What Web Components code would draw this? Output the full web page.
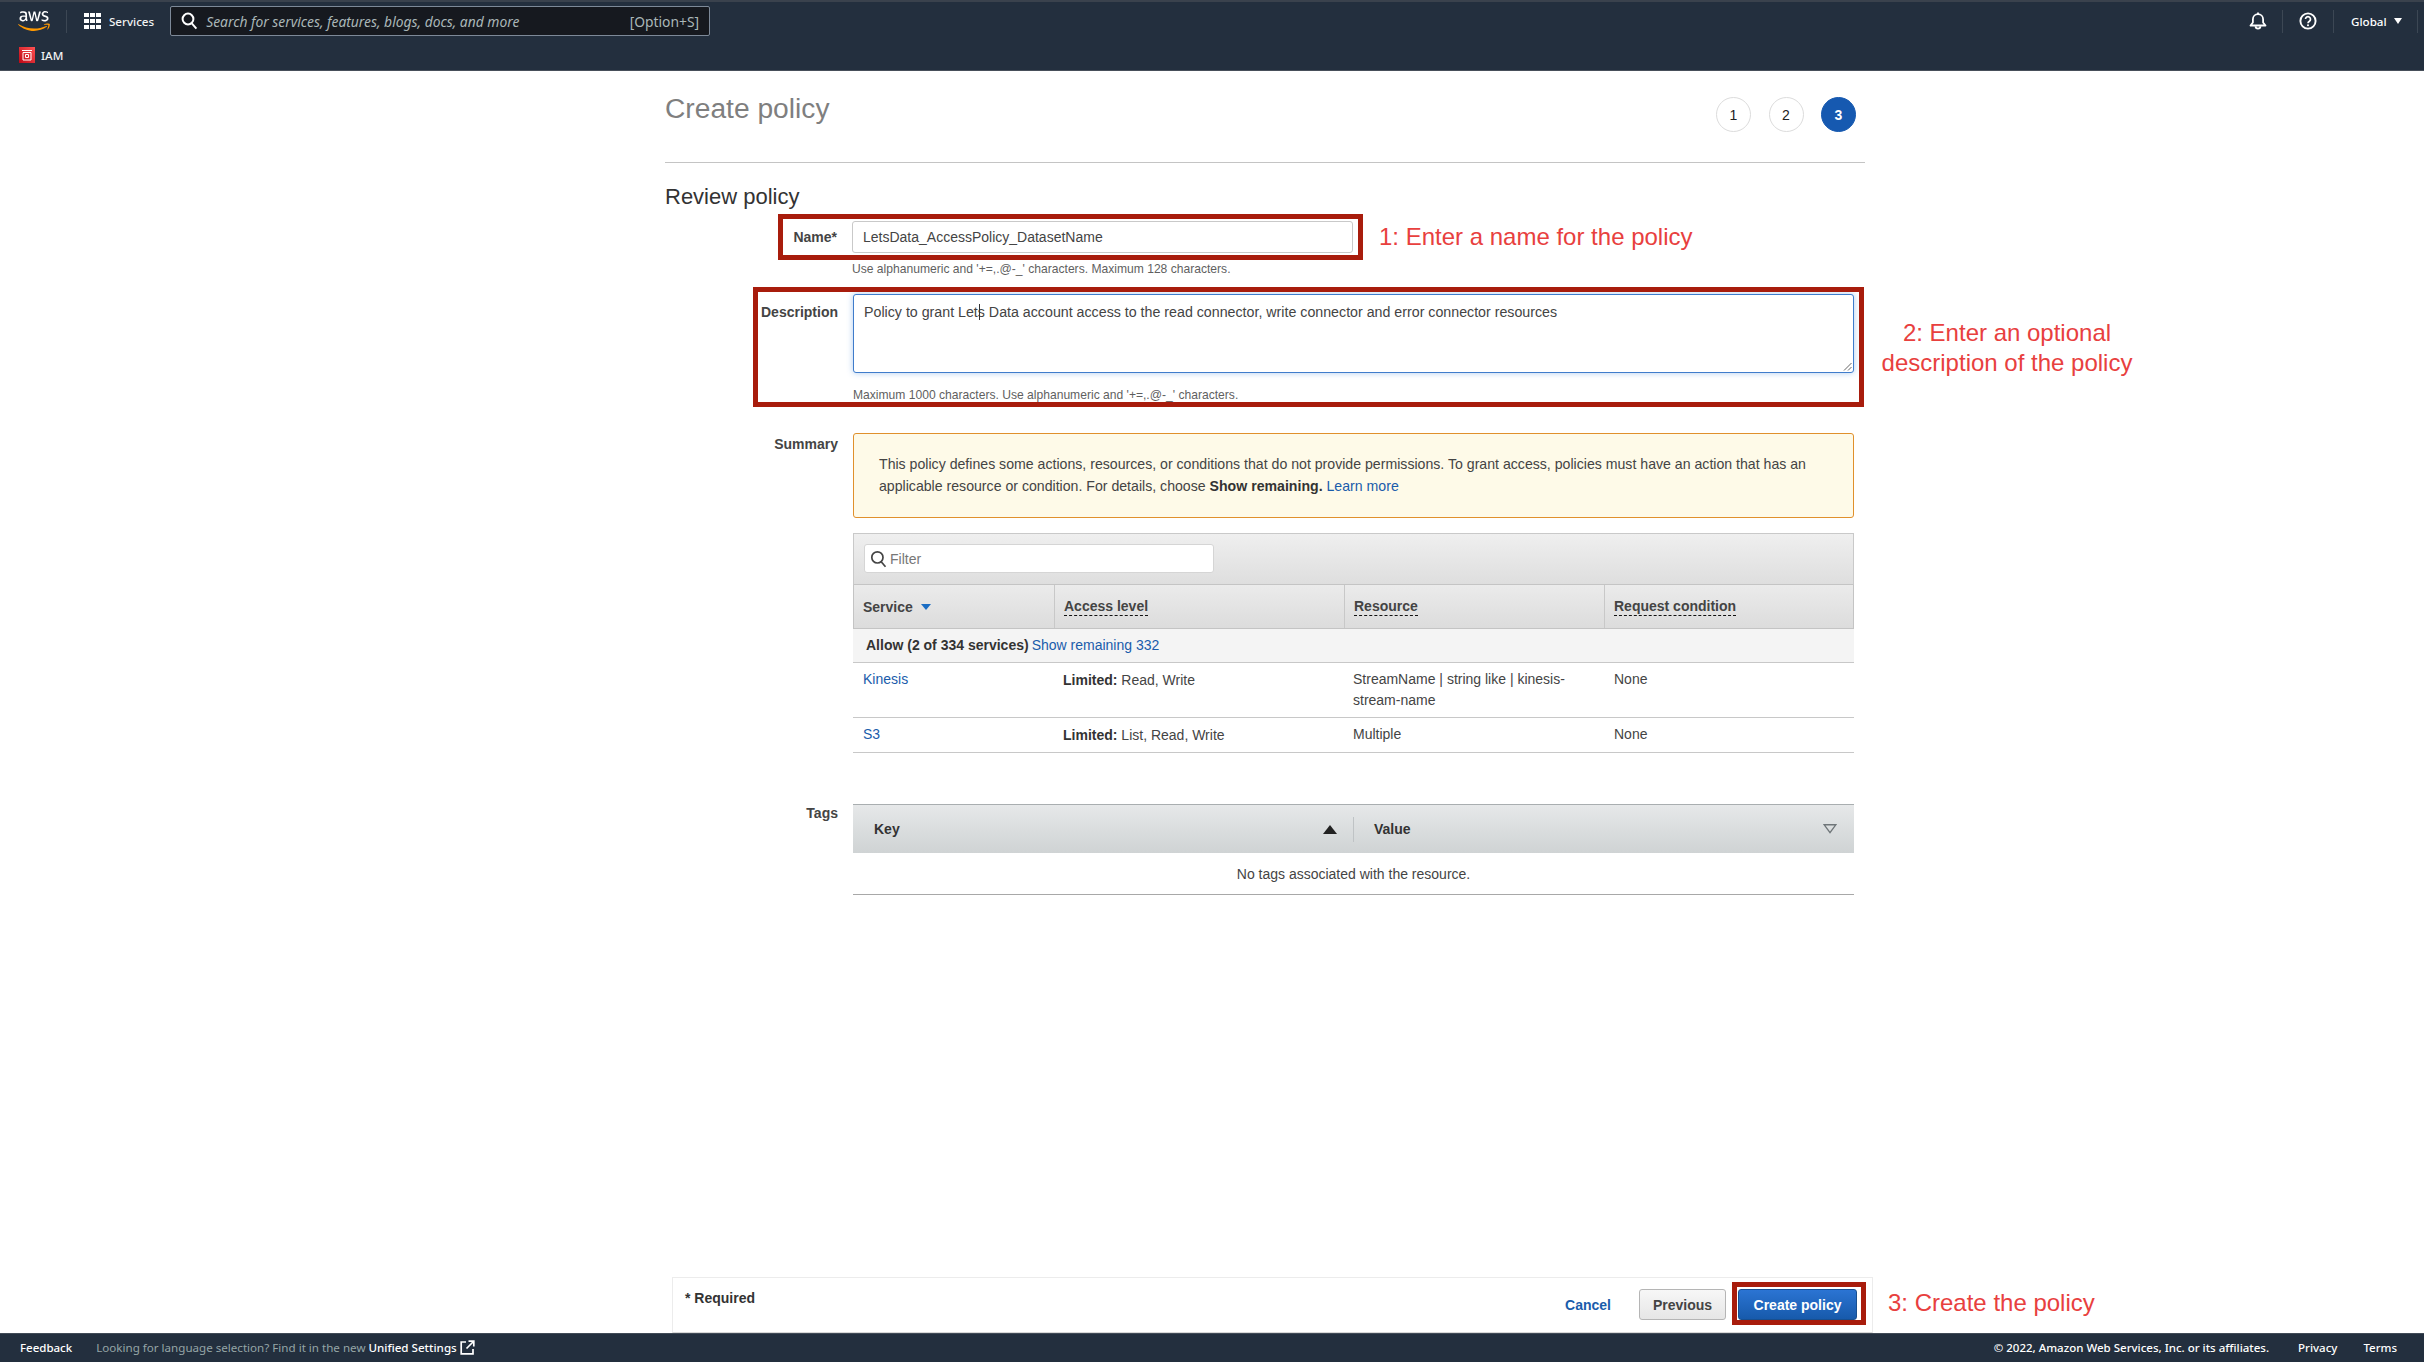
<!DOCTYPE html>
<html lang="en"><head><meta charset="utf-8"><title>Create policy</title>
<style>
html,body{margin:0;padding:0;height:100%;overflow:hidden;background:#fff}
body{display:flex;flex-direction:column;height:1362px;width:2424px;font-family:"Liberation Sans",Arial,sans-serif;font-size:14px;color:#444}
a{color:#1a5cab;text-decoration:none}
b{color:#333}
</style></head><body>

<aws-top-nav></aws-top-nav>

<policy-page>
  <page-title slot="head">Create policy</page-title>
  <wizard-steps slot="head" current="3" count="3"></wizard-steps>

  <h2-heading>Review policy</h2-heading>

  <form-row label="Name*" top="8" end="1" style="margin-top:9px">
    <text-field value="LetsData_AccessPolicy_DatasetName"></text-field>
    <field-hint style="margin-top:8px">Use alphanumeric and '+=,.@-_' characters. Maximum 128 characters.</field-hint>
  </form-row>

  <form-row label="Description" top="10" style="margin-top:17px">
    <area-field></area-field>
    <field-hint style="margin-top:14px;margin-left:0">Maximum 1000 characters. Use alphanumeric and '+=,.@-_' characters.</field-hint>
  </form-row>

  <form-row label="Summary" top="3" style="margin-top:30px">
    <warn-alert>This policy defines some actions, resources, or conditions that do not provide permissions. To grant access, policies must have an action that has an applicable resource or condition. For details, choose <b>Show remaining.</b> <a href="#">Learn more</a></warn-alert>
    <summary-table style="margin-top:15px"></summary-table>
  </form-row>

  <form-row label="Tags" top="1" style="margin-top:51px">
    <tags-table></tags-table>
  </form-row>

  <action-bar slot="bar"></action-bar>

  <red-box slot="over" style="left:778px;top:143px;width:585px;height:46px"></red-box>
  <red-box slot="over" style="left:753px;top:216px;width:1111px;height:120px"></red-box>
  <red-box slot="over" style="left:1732px;top:1211px;width:134px;height:43px"></red-box>
  <note-text slot="over" style="left:1379px;top:151px">1: Enter a name for the policy</note-text>
  <note-text slot="over" style="left:1857px;top:247px;width:300px;text-align:center">2: Enter an optional<br>description of the policy</note-text>
  <note-text slot="over" style="left:1888px;top:1217px">3: Create the policy</note-text>
</policy-page>

<console-footer></console-footer>

<script>
function def(name, html){
  customElements.define(name, class extends HTMLElement{
    connectedCallback(){
      if(this.shadowRoot) return;
      const r=this.attachShadow({mode:'open'});
      r.innerHTML=typeof html==='function'?html(this):html;
    }
  });
}
const NAVF='"Noto Sans","Open Sans",sans-serif';

def('aws-logo',`<style>:host{display:block;width:32px;height:20px}svg{display:block;width:100%;height:100%}</style>
<svg viewBox="0 0 304 182" preserveAspectRatio="none"><path fill="#fff" d="M86.4,66.4c0,3.7,0.4,6.7,1.1,8.9c0.8,2.2,1.8,4.6,3.2,7.2c0.5,0.8,0.7,1.6,0.7,2.3c0,1-0.6,2-1.9,3l-6.3,4.2c-0.9,0.6-1.8,0.9-2.6,0.9c-1,0-2-0.5-3-1.4C76.2,90,75,88.4,74,86.8c-1-1.7-2-3.6-3.1-5.9c-7.8,9.2-17.6,13.8-29.4,13.8c-8.4,0-15.1-2.4-20-7.2c-4.9-4.8-7.4-11.2-7.4-19.2c0-8.5,3-15.4,9.1-20.6c6.1-5.2,14.2-7.8,24.5-7.8c3.4,0,6.9,0.3,10.6,0.8c3.7,0.5,7.5,1.3,11.5,2.2v-7.3c0-7.6-1.6-12.9-4.7-16c-3.2-3.1-8.6-4.6-16.3-4.6c-3.5,0-7.1,0.4-10.8,1.3c-3.7,0.9-7.3,2-10.8,3.4c-1.6,0.7-2.8,1.1-3.5,1.3c-0.7,0.2-1.2,0.3-1.6,0.3c-1.4,0-2.1-1-2.1-3.1v-4.9c0-1.6,0.2-2.8,0.7-3.5c0.5-0.7,1.4-1.4,2.8-2.1c3.5-1.8,7.7-3.3,12.6-4.5c4.9-1.3,10.1-1.9,15.6-1.9c11.9,0,20.6,2.7,26.2,8.1c5.5,5.4,8.3,13.6,8.3,24.6V66.4z M45.8,81.6c3.3,0,6.7-0.6,10.3-1.8c3.6-1.2,6.8-3.4,9.5-6.4c1.6-1.9,2.8-4,3.4-6.4c0.6-2.4,1-5.3,1-8.7v-4.2c-2.9-0.7-6-1.3-9.2-1.7c-3.2-0.4-6.3-0.6-9.4-0.6c-6.7,0-11.6,1.3-14.9,4c-3.3,2.7-4.9,6.5-4.9,11.5c0,4.7,1.2,8.2,3.7,10.6C37.7,80.4,41.2,81.6,45.8,81.6z M126.1,92.4c-1.8,0-3-0.3-3.8-1c-0.8-0.6-1.5-2-2.1-3.9L96.7,10.2c-0.6-2-0.9-3.3-0.9-4c0-1.6,0.8-2.5,2.4-2.5h9.8c1.9,0,3.2,0.3,3.9,1c0.8,0.6,1.4,2,2,3.9l16.8,66.2l15.6-66.2c0.5-2,1.1-3.3,1.9-3.9c0.8-0.6,2.2-1,4-1h8c1.9,0,3.2,0.3,4,1c0.8,0.6,1.5,2,1.9,3.9l15.8,67l17.3-67c0.6-2,1.3-3.3,2-3.9c0.8-0.6,2.1-1,3.9-1h9.3c1.6,0,2.5,0.8,2.5,2.5c0,0.5-0.1,1-0.2,1.6c-0.1,0.6-0.3,1.4-0.7,2.5l-24.1,77.3c-0.6,2-1.3,3.3-2.1,3.9c-0.8,0.6-2.1,1-3.8,1h-8.6c-1.9,0-3.2-0.3-4-1c-0.8-0.7-1.5-2-1.9-4L156,23l-15.4,64.4c-0.5,2-1.1,3.3-1.9,4c-0.8,0.7-2.2,1-4,1H126.1z M254.6,95.1c-5.2,0-10.4-0.6-15.4-1.8c-5-1.2-8.9-2.5-11.5-4c-1.6-0.9-2.7-1.9-3.1-2.8c-0.4-0.9-0.6-1.9-0.6-2.8v-5.1c0-2.1,0.8-3.1,2.3-3.1c0.6,0,1.2,0.1,1.8,0.3c0.6,0.2,1.5,0.6,2.5,1c3.4,1.5,7.1,2.7,11,3.5c4,0.8,7.9,1.2,11.9,1.2c6.3,0,11.2-1.1,14.6-3.3c3.4-2.2,5.2-5.4,5.2-9.5c0-2.8-0.9-5.1-2.7-7c-1.8-1.9-5.2-3.6-10.1-5.2L246,52c-7.3-2.3-12.7-5.7-16-10.2c-3.3-4.4-5-9.3-5-14.5c0-4.2,0.9-7.9,2.7-11.1c1.8-3.2,4.2-6,7.2-8.2c3-2.3,6.4-4,10.4-5.2c4-1.2,8.2-1.7,12.6-1.7c2.2,0,4.5,0.1,6.7,0.4c2.3,0.3,4.4,0.7,6.5,1.1c2,0.5,3.9,1,5.7,1.6c1.8,0.6,3.2,1.2,4.2,1.8c1.4,0.8,2.4,1.6,3,2.5c0.6,0.8,0.9,1.9,0.9,3.3v4.7c0,2.1-0.8,3.2-2.3,3.2c-0.8,0-2.1-0.4-3.8-1.2c-5.7-2.6-12.1-3.9-19.2-3.9c-5.7,0-10.2,0.9-13.3,2.8c-3.1,1.9-4.7,4.8-4.7,8.9c0,2.8,1,5.2,3,7.1c2,1.9,5.7,3.8,11,5.5l14.2,4.5c7.2,2.3,12.4,5.5,15.5,9.6c3.1,4.1,4.6,8.8,4.6,14c0,4.3-0.9,8.2-2.6,11.6c-1.8,3.4-4.2,6.4-7.3,8.8c-3.1,2.5-6.8,4.3-11.1,5.6C264.4,94.4,259.7,95.1,254.6,95.1z"/><path fill="#f90" d="M273.5,143.7c-32.9,24.3-80.7,37.2-121.8,37.2c-57.6,0-109.5-21.3-148.7-56.7c-3.1-2.8-0.3-6.6,3.4-4.4c42.4,24.6,94.7,39.5,148.8,39.5c36.5,0,76.6-7.6,113.5-23.2C274.2,133.6,278.9,139.7,273.5,143.7z"/><path fill="#f90" d="M287.2,128.1c-4.2-5.4-27.8-2.6-38.5-1.3c-3.2,0.4-3.7-2.4-0.8-4.5c18.8-13.2,49.7-9.4,53.3-5c3.6,4.5-1,35.4-18.6,50.2c-2.7,2.3-5.3,1.1-4.1-1.9C282.5,155.7,291.4,133.4,287.2,128.1z"/></svg>`);

def('aws-top-nav',`<style>
:host{display:block;height:71px;box-sizing:border-box;background:#232f3e;border-top:2px solid #3a424d;border-bottom:1px solid #474f5a;color:#fff;font-family:${NAVF};flex:none}
.row1{display:flex;align-items:center;height:34px;margin-top:2px}
aws-logo{margin-left:18px}
.sep{width:1px;height:23px;background:#3c4754}
.services{display:flex;align-items:center;gap:8px;font-size:11.6px;font-weight:500;margin-left:17px;color:#f2f3f3}
.grid{display:grid;grid-template-columns:repeat(3,4.6px);gap:1.6px}
.grid i{display:block;height:4.6px;background:#fff}
.search{margin-left:16px;width:540px;height:30px;box-sizing:border-box;background:#16191f;border:1px solid #7d8998;border-radius:2px;display:flex;align-items:center;padding:0 10px;gap:8px;font-size:13.85px;color:#aab7b8}
.search em{flex:1;font-style:italic}
.search svg{flex:none}
.right{margin-left:auto;display:flex;align-items:center;height:23px}
.ic{width:50px;display:flex;justify-content:center}
.global{display:flex;align-items:center;gap:7px;font-size:11.6px;font-weight:500;padding:0 17px;height:23px;width:85px;box-sizing:border-box;border-left:1px solid #3c4754;border-right:1px solid #3c4754;margin-right:6px}
.global i{width:0;height:0;border:4px solid transparent;border-top:6px solid #fff;border-bottom:0}
.ic+.ic{border-left:1px solid #3c4754;height:23px;align-items:center}
.row2{display:flex;align-items:center;margin:9px 0 0 19px;gap:6px;font-size:11.6px;font-weight:500;color:#f2f3f3}
</style>
<div class="row1">
  <aws-logo></aws-logo><span class="sep" style="margin-left:16px"></span>
  <div class="services"><span class="grid"><i></i><i></i><i></i><i></i><i></i><i></i><i></i><i></i><i></i></span>Services</div>
  <div class="search"><svg width="17" height="18" viewBox="0 0 17 18" fill="none" stroke="#fff" stroke-width="2"><circle cx="7" cy="7" r="5.4"/><path d="M10.8 11.4l4.6 5.2"/></svg><em>Search for services, features, blogs, docs, and more</em><span>[Option+S]</span></div>
  <div class="right">
    <div class="ic" style="padding-left:2px;box-sizing:border-box"><svg width="18" height="18" viewBox="0 0 18 18" fill="none" stroke="#fff" stroke-width="1.8" stroke-linejoin="round"><path d="M1.5 13.5h15l-2.4-3V7.2A5.1 5.1 0 0 0 9 2.2a5.1 5.1 0 0 0-5.1 5v3.3z"/><path d="M6.6 14.2a2.4 2.4 0 0 0 4.8 0"/><path d="M9 .6v1.4"/></svg></div>
    <div class="ic"><svg width="18" height="18" viewBox="0 0 18 18" fill="none" stroke="#fff" stroke-width="1.9"><circle cx="9" cy="9" r="7.6"/><path d="M6.5 7.1a2.5 2.5 0 1 1 3.9 2.1c-.9.6-1.4 1-1.4 2" stroke-width="1.7"/><circle cx="9" cy="13.2" r="1.05" fill="#fff" stroke="none"/></svg></div>
    <div class="global">Global<i></i></div>
  </div>
</div>
<div class="row2"><svg width="16" height="16" viewBox="0 0 16 16"><defs><linearGradient id="g" x1="0" y1="1" x2="1" y2="0"><stop offset="0" stop-color="#bd0816"/><stop offset="1" stop-color="#ff5252"/></linearGradient></defs><rect width="16" height="16" fill="url(#g)"/><g fill="none" stroke="#fff" stroke-width="1"><path d="M3 3.5h10M4 5.5h8v7.5H4z"/><path d="M6.5 7.5h3v3h-3z"/></g></svg>IAM</div>`);

def('policy-page',`<style>
:host{display:block;position:relative;flex:1;min-height:0}
.wrap{box-sizing:border-box;height:100%;width:1200px;margin-left:665px;display:flex;flex-direction:column}
.head{display:flex;justify-content:space-between;height:91px;border-bottom:1px solid #c4c4c4;flex:none;box-sizing:content-box}
::slotted(action-bar){margin-top:auto}
</style>
<div class="wrap">
  <div class="head"><slot name="head"></slot></div>
  <slot></slot>
  <slot name="bar"></slot>
</div>
<slot name="over"></slot>`);

def('page-title',`<style>:host{display:block;font-size:28.2px;line-height:34px;padding-top:20px;color:#7f7f7f}</style><slot></slot>`);

def('wizard-steps',el=>{
  const n=+el.getAttribute('count'),c=+el.getAttribute('current');let s='';
  for(let i=1;i<=n;i++) s+=`<span class="${i===c?'on':''}">${i}</span>`;
  return `<style>:host{display:flex;gap:17.5px;padding:26px 9px 0 0}
  span{width:35px;height:35px;box-sizing:border-box;border:1px solid #dcdcdc;border-radius:50%;display:flex;align-items:center;justify-content:center;font-size:14px;color:#222}
  .on{background:#1659b0;border-color:#1659b0;color:#fff;font-weight:700}</style>${s}`;
});

def('h2-heading',`<style>:host{display:block;font-size:22px;line-height:30px;margin-top:19px;color:#333}</style><slot></slot>`);

def('form-row',el=>`<style>
:host{display:grid;grid-template-columns:173px 1001px;column-gap:15px}
.l{text-align:right;font-weight:700;color:#444;font-size:14px;line-height:16px;padding-top:${el.getAttribute('top')}px;padding-right:${el.getAttribute('end')||0}px}
.c{min-width:0}
</style><div class="l">${el.getAttribute('label')}</div><div class="c"><slot></slot></div>`);

def('text-field',el=>`<style>
:host{display:block;margin-left:-1px;width:501px;height:32px;box-sizing:border-box;border:1px solid #c9c9c9;border-radius:3px;background:#fff;padding:0 10px;line-height:30px;font-size:14px;color:#444}
</style>${el.getAttribute('value')}`);

def('field-hint',`<style>:host{display:block;font-size:12.1px;line-height:16px;color:#5f5f5f;margin-left:-1px}</style><slot></slot>`);

def('area-field',`<style>
:host{display:block;position:relative;height:79px;box-sizing:border-box;border:1px solid #3f7ccb;border-radius:3px;background:#fff;box-shadow:0 0 6px rgba(70,140,220,.45);padding:8px 10px;line-height:18px;font-size:14.22px;color:#444}
.caret{position:absolute;left:125px;top:9px;width:1px;height:16px;background:#333}
svg{position:absolute;right:1px;bottom:1px}
</style>Policy to grant Lets Data account access to the read connector, write connector and error connector resources<span class="caret"></span><svg width="9" height="9" viewBox="0 0 9 9" fill="none" stroke="#666" stroke-width="1"><path d="M1 8.5L8.5 1M5 8.5L8.5 5"/></svg>`);

def('warn-alert',`<style>
:host{display:block;box-sizing:border-box;height:85px;border:1px solid #e0902c;border-radius:3px;background:#fefae8;padding:19px 25px 0;font-size:14.14px;line-height:22px;color:#444}
</style><slot></slot>`);

def('summary-table',`<style>
:host{display:block;font-size:14px;color:#444}
.bar{height:52px;box-sizing:border-box;border:1px solid #c9c9c9;border-bottom:1px solid #c4c4c4;background:linear-gradient(#efefef,#dedede);padding:10px 10px 0}
.filter{width:350px;height:29px;box-sizing:border-box;background:#fff;border:1px solid #d5d5d5;border-radius:3px;display:flex;align-items:center;gap:3px;padding-left:5px;color:#777;font-size:14px}
.cols,.row{display:grid}
.cols{grid-template-columns:200px 290px 260px 249px;height:44px;border:0 solid #c4c4c4;border-width:0 1px 1px;background:linear-gradient(#ebebeb,#dcdcdc);box-sizing:border-box}
.cols>div{padding:0 0 0 9px;display:flex;align-items:center;gap:8px;font-weight:700;color:#444;border-left:1px solid #c8c8c8}
.cols>div:first-child{border-left:0}
.cols u{text-decoration:none;border-bottom:1px dashed #111;line-height:15px;padding-bottom:1px;margin-top:2px}
.tri{width:0;height:0;border:5px solid transparent;border-top:6px solid #1a6dc4;border-bottom:0}
.allow{height:34px;background:#f4f4f4;border-bottom:1px solid #c8c8c8;box-sizing:border-box;padding:0 0 2px 13px;display:flex;align-items:center;gap:3px}
.allow b{color:#333}
.row{grid-template-columns:200px 290px 261px 250px;border-bottom:1px solid #c8c8c8;box-sizing:border-box;line-height:21px}
.row>div{padding:6px 10px 0}
.row>div.lim{padding-top:7px}
.row b{color:#333}
a{color:#1a5cab;text-decoration:none}
</style>
<div class="bar"><div class="filter"><svg width="17" height="18" viewBox="0 0 17 18" fill="none" stroke="#444" stroke-width="1.7"><circle cx="7.4" cy="7.4" r="5.6"/><path d="M11.2 11.8l4.3 5"/></svg>Filter</div></div>
<div class="cols"><div>Service<span class="tri"></span></div><div><u>Access level</u></div><div><u>Resource</u></div><div><u>Request condition</u></div></div>
<div class="allow"><b>Allow (2 of 334 services)</b><a href="#">Show remaining 332</a></div>
<div class="row" style="height:55px"><div><a href="#">Kinesis</a></div><div class="lim"><b>Limited:</b> Read, Write</div><div>StreamName | string like | kinesis-stream-name</div><div>None</div></div>
<div class="row" style="height:35px"><div><a href="#">S3</a></div><div class="lim"><b>Limited:</b> List, Read, Write</div><div>Multiple</div><div>None</div></div>`);

def('tags-table',`<style>
:host{display:block;font-size:14px;color:#444}
.h{height:49px;box-sizing:border-box;border-top:1px solid #a9aeb0;background:linear-gradient(#e6e8e9,#cfd3d4);display:flex;align-items:center;font-weight:700;color:#333}
.k{width:501px;box-sizing:border-box;padding:0 16px 0 21px;height:25px;display:flex;align-items:center;justify-content:space-between;border-right:1px solid #bfc3c5}
.v{flex:1;padding:0 17px 0 20px;display:flex;align-items:center;justify-content:space-between}
.e{height:41px;line-height:43px;text-align:center;border-bottom:1px solid #a8a8a8;color:#444;box-sizing:content-box}
</style>
<div class="h"><div class="k">Key<svg width="14" height="9" viewBox="0 0 14 9"><path d="M7 0l7 9H0z" fill="#222"/></svg></div><div class="v">Value<svg width="14" height="10" viewBox="0 0 14 10" fill="none" stroke="#6f7679" stroke-width="1.4"><path d="M1.2.8h11.6L7 8.6z"/></svg></div></div>
<div class="e">No tags associated with the resource.</div>`);

def('action-bar',`<style>
:host{display:flex;height:56px;box-sizing:border-box;width:1201px;margin-left:7px;border:1px solid #ececec;border-bottom-color:#d8d8d8;background:#fff;flex:none}
.req{font-weight:700;color:#333;padding:12px 0 0 12px;line-height:16px}
.act{margin-left:auto;display:flex;align-items:flex-start;padding:11px 15px 0 0;font-weight:700;font-size:14px}
.cancel{color:#1a5cab;line-height:32px;margin-right:28px}
.btn{height:31px;box-sizing:border-box;border:1px solid #b5b5b5;border-radius:3px;line-height:30px;text-align:center;background:linear-gradient(#f7f7f7,#e6e6e6);color:#444;width:87px}
.pri{margin-left:12px;width:119px;background:linear-gradient(#2b74d3,#175aab);border-color:#174f90;color:#fff}
</style>
<div class="req">* Required</div>
<div class="act"><span class="cancel">Cancel</span><span class="btn">Previous</span><span class="btn pri">Create policy</span></div>`);

def('red-box',`<style>:host{display:block;position:absolute;box-sizing:border-box;border:5px solid #a81c0c;pointer-events:none}</style>`);
def('note-text',`<style>:host{display:block;position:absolute;font-size:24px;line-height:30px;color:#e8403e;white-space:nowrap}</style><slot></slot>`);

def('console-footer',`<style>
:host{display:flex;align-items:center;height:29px;box-sizing:border-box;flex:none;background:#232f3e;border-top:1px solid #414b57;padding-bottom:1px;color:#fff;font-family:${NAVF};font-size:11.5px;font-weight:500;white-space:nowrap;position:relative}
.fb{margin-left:20px}
.msg{margin-left:24px;color:#95a5a6;display:flex;align-items:center;font-weight:400;font-size:11.6px}
.msg b{color:#fff;font-weight:500;margin-left:3px}
.msg svg{margin-left:3px}
.r{margin-left:auto;display:flex;gap:26px;padding-right:27px}
.r span:first-child{margin-right:3px}
</style>
<span class="fb">Feedback</span>
<span class="msg">Looking for language selection? Find it in the new <b>Unified Settings</b><svg width="15" height="15" viewBox="0 0 15 15" fill="none" stroke="#fff" stroke-width="1.7"><path d="M6 2H1.2v11.8H13V9"/><path d="M6.5 8.5L13.5 1.5M8.5 1.2h5.3v5.3"/></svg></span>
<span class="r"><span>© 2022, Amazon Web Services, Inc. or its affiliates.</span><span>Privacy</span><span>Terms</span></span>`);
</script>
</body></html>
